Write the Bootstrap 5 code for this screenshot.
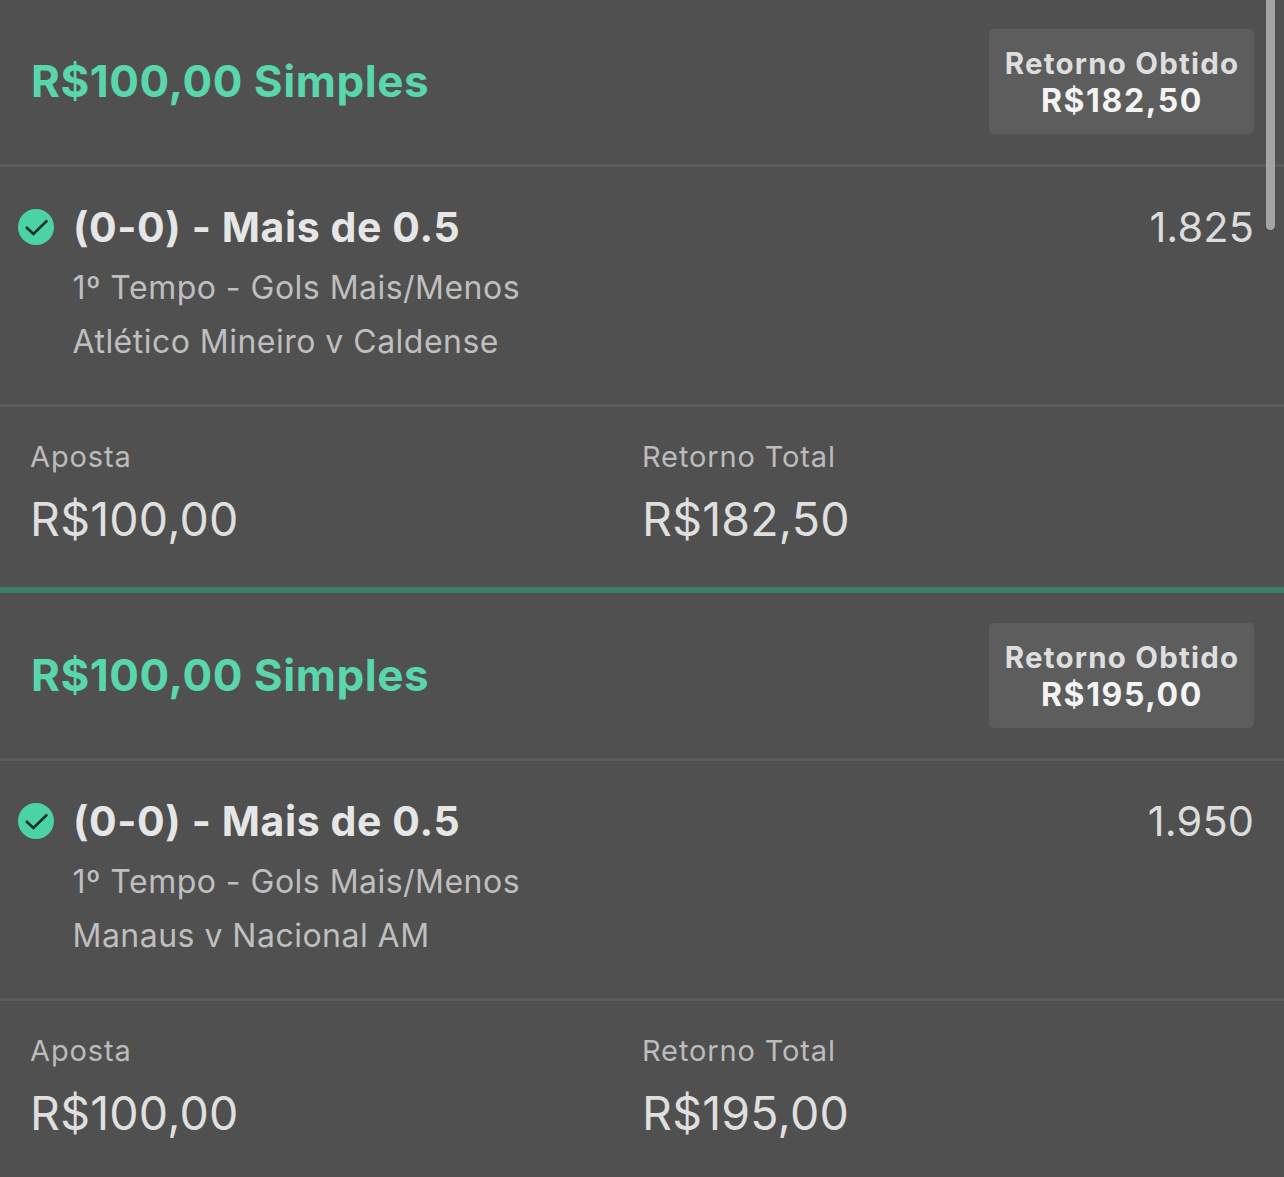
<!DOCTYPE html>
<html lang="pt-BR">
<head>
<meta charset="utf-8">
<meta name="viewport" content="width=device-width, initial-scale=1">
<title>Minhas Apostas</title>
<link href="https://cdn.jsdelivr.net/npm/bootstrap@5.3.0/dist/css/bootstrap.min.css" rel="stylesheet">
<style>
body{background:#505050;color:#dfdfdf;font-family:Inter,"Liberation Sans",sans-serif;height:1177px;overflow:hidden;white-space:nowrap}
.bet{height:587px}
.bet-split{height:6px;background:#3b7f66;margin-bottom:1px}
.bet-head{height:167px;padding:0 30px 1px 31px;border-bottom:3px solid #5c5c5c}
.bet-title{font-size:44px;line-height:54px;padding-bottom:2px;font-weight:700;letter-spacing:.55px;color:#5ad6ac}
.bet-return{width:265px;height:105px;border-radius:5px;background:#5d5d5d;line-height:38px}
.ret-label{font-size:29.5px;font-weight:700;letter-spacing:1.2px;margin-right:-1px;color:#dedede}
.ret-value{font-size:32px;font-weight:700;letter-spacing:1.6px;margin-right:-1px;color:#f4f4f4}
.bet-event{height:240px;padding:30px 30px 0 18px;border-bottom:3px solid #5c5c5c}
.won-icon{width:36px;height:36px;margin-right:19px}
.pick{font-size:41px;line-height:60px;font-weight:700;letter-spacing:.6px;color:#e6e6e6}
.odds{font-size:41.5px;line-height:60px;letter-spacing:.1px;color:#dcdcdc}
.info{font-size:32px;line-height:54px;letter-spacing:.48px;color:#bfbfbf;padding:4px 0 0 54.5px}
.bet-stakes{padding:32px 0 0 30px}
.stake-col{width:612px}
.stake-label{font-size:29px;line-height:36px;letter-spacing:.87px;color:#bcbcbc}
.stake-value{font-size:46.5px;line-height:60px;letter-spacing:.2px;margin-top:14px;color:#dfdfdf}
.scroll-thumb{right:9px;width:9px;height:230px;border-radius:0 0 5px 5px;background:#a4a4a4}
</style>
</head>
<body>
<main>
<section class="bet">
  <header class="bet-head d-flex align-items-center justify-content-between">
    <div class="bet-title">R$100,00 Simples</div>
    <div class="bet-return d-flex flex-column align-items-center justify-content-center">
      <div class="ret-label">Retorno Obtido</div>
      <div class="ret-value">R$182,50</div>
    </div>
  </header>
  <div class="bet-event">
    <div class="d-flex align-items-center">
      <svg class="won-icon flex-shrink-0" viewBox="0 0 36 36"><circle cx="18" cy="18" r="18" fill="#4bd3a5"/><path d="M8 18l7.4 7L29.2 11.5" fill="none" stroke="#14302a" stroke-width="2.6"/></svg>
      <div class="pick">(0-0) - Mais de 0.5</div>
      <div class="odds ms-auto">1.825</div>
    </div>
    <div class="info"><div>1º Tempo - Gols Mais/Menos</div><div>Atlético Mineiro v Caldense</div></div>
  </div>
  <div class="bet-stakes d-flex">
    <div class="stake-col"><div class="stake-label">Aposta</div><div class="stake-value">R$100,00</div></div>
    <div><div class="stake-label">Retorno Total</div><div class="stake-value">R$182,50</div></div>
  </div>
</section>
<div class="bet-split"></div>
<section class="bet">
  <header class="bet-head d-flex align-items-center justify-content-between">
    <div class="bet-title">R$100,00 Simples</div>
    <div class="bet-return d-flex flex-column align-items-center justify-content-center">
      <div class="ret-label">Retorno Obtido</div>
      <div class="ret-value">R$195,00</div>
    </div>
  </header>
  <div class="bet-event">
    <div class="d-flex align-items-center">
      <svg class="won-icon flex-shrink-0" viewBox="0 0 36 36"><circle cx="18" cy="18" r="18" fill="#4bd3a5"/><path d="M8 18l7.4 7L29.2 11.5" fill="none" stroke="#14302a" stroke-width="2.6"/></svg>
      <div class="pick">(0-0) - Mais de 0.5</div>
      <div class="odds ms-auto">1.950</div>
    </div>
    <div class="info"><div>1º Tempo - Gols Mais/Menos</div><div>Manaus v Nacional AM</div></div>
  </div>
  <div class="bet-stakes d-flex">
    <div class="stake-col"><div class="stake-label">Aposta</div><div class="stake-value">R$100,00</div></div>
    <div><div class="stake-label">Retorno Total</div><div class="stake-value">R$195,00</div></div>
  </div>
</section>
</main>
<div class="scroll-thumb position-fixed top-0"></div>
<script src="https://cdn.jsdelivr.net/npm/bootstrap@5.3.0/dist/js/bootstrap.bundle.min.js"></script>
</body>
</html>
